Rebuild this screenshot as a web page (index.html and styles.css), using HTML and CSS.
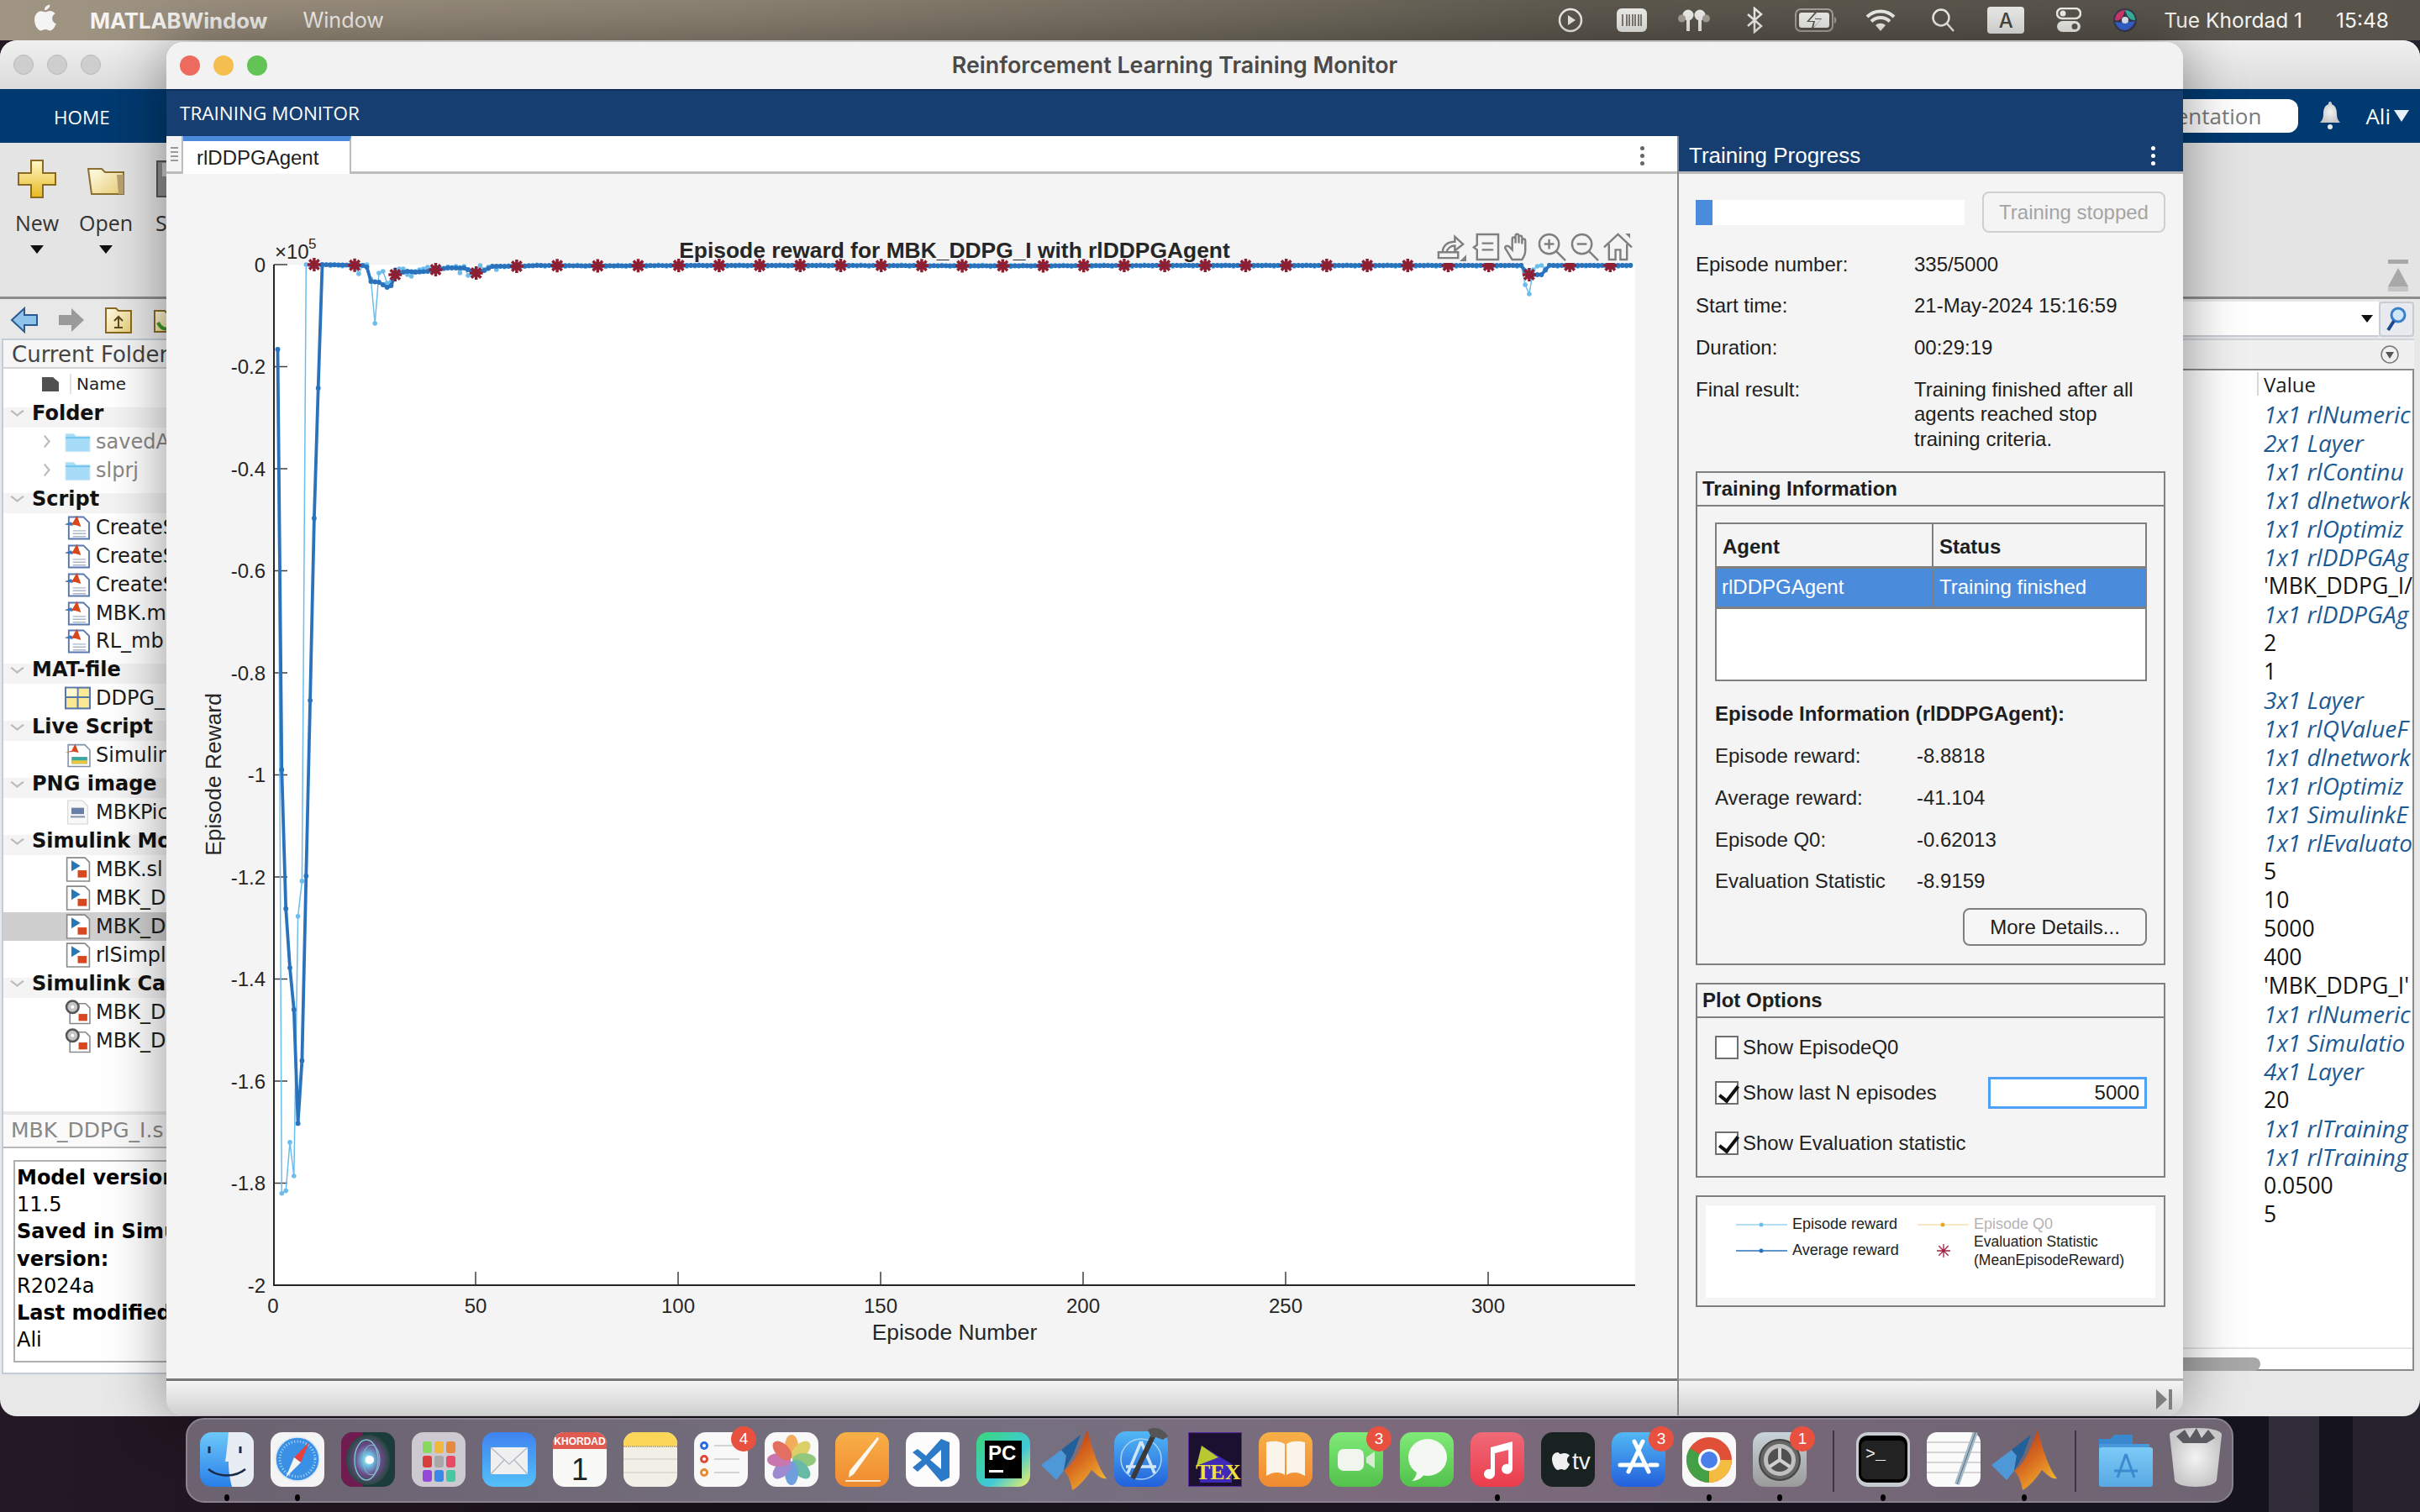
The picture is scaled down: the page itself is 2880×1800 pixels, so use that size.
FILE: index.html
```html
<!DOCTYPE html>
<html lang="en">
<head>
<meta charset="utf-8">
<title>Reinforcement Learning Training Monitor</title>
<link rel="stylesheet" href="styles.css">
</head>
<body>
<svg class="defs" width="0" height="0" aria-hidden="true">
  <defs>
    <linearGradient id="gYellow" x1="0" y1="0" x2="0" y2="1"><stop offset="0" stop-color="#fff8c8"/><stop offset="1" stop-color="#e8b820"/></linearGradient>
    <linearGradient id="gFolder" x1="0" y1="0" x2="1" y2="1"><stop offset="0" stop-color="#fffbe8"/><stop offset="1" stop-color="#e9cf78"/></linearGradient>
    <linearGradient id="gFinder" x1="0" y1="0" x2="0" y2="1"><stop offset="0" stop-color="#6cc8fa"/><stop offset="1" stop-color="#2a7fe8"/></linearGradient>
    <linearGradient id="gMail" x1="0" y1="0" x2="0" y2="1"><stop offset="0" stop-color="#3f83f0"/><stop offset="1" stop-color="#54c0f8"/></linearGradient>
    <linearGradient id="gOrange" x1="0" y1="0" x2="0" y2="1"><stop offset="0" stop-color="#f8b048"/><stop offset="1" stop-color="#f08a30"/></linearGradient>
    <linearGradient id="gGreen" x1="0" y1="0" x2="0" y2="1"><stop offset="0" stop-color="#80ea78"/><stop offset="1" stop-color="#52c24c"/></linearGradient>
    <linearGradient id="gRed" x1="0" y1="0" x2="0" y2="1"><stop offset="0" stop-color="#f06a78"/><stop offset="1" stop-color="#ea3c4c"/></linearGradient>
    <linearGradient id="gBlue" x1="0" y1="0" x2="0" y2="1"><stop offset="0" stop-color="#52b8f4"/><stop offset="1" stop-color="#2260dc"/></linearGradient>
    <linearGradient id="gPeak" x1="0" y1="0" x2="0.6" y2="1"><stop offset="0" stop-color="#a82c18"/><stop offset="0.55" stop-color="#d86a20"/><stop offset="1" stop-color="#f0b030"/></linearGradient>
    <linearGradient id="gPC" x1="0" y1="0" x2="1" y2="1"><stop offset="0" stop-color="#38d878"/><stop offset="0.6" stop-color="#40c8d8"/><stop offset="1" stop-color="#f4f060"/></linearGradient>
    <linearGradient id="gSys" x1="0" y1="0" x2="0" y2="1"><stop offset="0" stop-color="#c8d4d8"/><stop offset="1" stop-color="#9a9a9a"/></linearGradient>
    <linearGradient id="gFold" x1="0" y1="0" x2="0" y2="1"><stop offset="0" stop-color="#7ccaf6"/><stop offset="1" stop-color="#58a8e4"/></linearGradient>
    <radialGradient id="gSiri"><stop offset="0" stop-color="#ffffff"/><stop offset="0.22" stop-color="#6ec8e8"/><stop offset="0.6" stop-color="#6a4a88"/><stop offset="1" stop-color="#284840"/></radialGradient>
    <radialGradient id="gTrash"><stop offset="0" stop-color="#f4f4f4"/><stop offset="1" stop-color="#c8c8c8"/></radialGradient>

    <g id="star"><path d="M-8 0H8M0-8V8M-5.7-5.7 5.7 5.7M-5.7 5.7 5.7-5.7"/></g>

    <symbol id="ml" viewBox="0 0 78 72">
      <polygon points="0,42 24,24 30,31 27,49 18,60" fill="#4f98d8"/>
      <polygon points="24,24 47,6 38,30 27,49 30,31" fill="#22609c"/>
      <path d="M55 0C60 20 68 46 78 58 72 60 66 53 60 48 54 57 45 68 37 72 35 60 31 52 27 49 41 40 47 20 55 0Z" fill="url(#gPeak)"/>
    </symbol>
    <symbol id="fi-folder" viewBox="0 0 32 26">
      <path d="M1 3h10l3 3h17v19H1z" fill="#a6dcf8" stroke="#d8e8f0"/>
      <path d="M1 8h30" stroke="#70c4ee" stroke-width="2"/>
    </symbol>
    <symbol id="fi-script" viewBox="0 0 32 30">
      <path d="M5 2h18l7 7v20H5z" fill="#fff" stroke="#5a78b0" stroke-width="2"/>
      <path d="M10 19h16M10 22.500h16M10 26h16" stroke="#aab6c8" stroke-width="1.500"/>
      <path d="M0 11l10-2 5-9 5 14-7-2z" fill="#d8481c"/>
      <path d="M0 11l8-3 2 5z" fill="#3878c0"/>
    </symbol>
    <symbol id="fi-mat" viewBox="0 0 30 26">
      <rect x="1" y="1" width="28" height="24" fill="#fbe996" stroke="#5878a8" stroke-width="2"/>
      <path d="M15 1v24M1 12h28" stroke="#5878a8" stroke-width="2"/>
      <rect x="2" y="2" width="12" height="9" fill="#fff8d0"/>
    </symbol>
    <symbol id="fi-live" viewBox="0 0 30 28">
      <path d="M4 2h19l6 6v19H4z" fill="#fff" stroke="#8090a8" stroke-width="1.500"/>
      <path d="M8 16h18v8H8z" fill="#38a8a0"/><path d="M8 20h18v4H8z" fill="#e8c840"/>
      <path d="M0 11l8-2 4-8 4 10-6-1z" fill="#d8481c"/>
    </symbol>
    <symbol id="fi-png" viewBox="0 0 26 28">
      <path d="M2 1h16l6 6v20H2z" fill="#f8f8f8" stroke="#d4d4d4"/>
      <rect x="6" y="9" width="14" height="7" fill="#6880a8"/>
      <path d="M5 19h16" stroke="#8898b0" stroke-width="2"/>
    </symbol>
    <symbol id="fi-slx" viewBox="0 0 28 28">
      <path d="M2 1h20l5 5v21H2z" fill="#fff" stroke="#888" stroke-width="1.500"/>
      <path d="M7 4l10 6-10 6z" fill="#2878b8"/>
      <rect x="14" y="15" width="10" height="8" fill="#d84820"/>
    </symbol>
    <symbol id="fi-slxc" viewBox="0 0 30 28">
      <path d="M6 4h18l5 5v18H6z" fill="#fff" stroke="#888" stroke-width="1.500"/>
      <circle cx="9" cy="8" r="7" fill="#c4c4c4" stroke="#555" stroke-width="2.500"/>
      <circle cx="9" cy="8" r="2" fill="#fff"/>
      <rect x="16" y="16" width="10" height="8" fill="#d84820"/>
    </symbol>
  </defs>
</svg>

<header class="menubar">
  <svg class="apple" viewBox="0 0 28 32"><path d="M19 0c.3 3.500-3 7-6.500 6.800C12.100 3.400 15.500.3 19 0ZM13 9c1.800 0 3.300-1.400 6.200-1.400 2.200 0 4.700 1.100 6.300 3.400-5.300 3.100-4.400 10.500 1.300 12.600-1.600 3.700-4.300 8.400-7.400 8.400-2.200 0-3-1.400-5.700-1.400-2.800 0-3.700 1.400-5.700 1.400C4.300 32 0 25.200 0 18.800 0 12.500 4 8 8.100 8c2 0 3.600 1 4.900 1Z"/></svg>
  <span class="menu-app">MATLABWindow</span>
  <span class="menu-item">Window</span>
  <div class="menu-icons">
    <svg width="30" height="30" viewBox="0 0 30 30"><circle cx="15" cy="15" r="13" class="st-w"/><path d="M12 9l9 6-9 6z" class="fl-w"/></svg>
    <svg width="36" height="28" viewBox="0 0 36 28"><rect width="36" height="28" rx="6" class="fl-w"/><path d="M7 7v14M12 7v14M15 7v14M19 7v14M22 7v14M26 7v14M29 7v14" stroke="#5f5a50" stroke-width="1.500"/></svg>
    <svg width="38" height="26" viewBox="0 0 38 26"><rect x="10" y="6" width="4" height="20" class="fl-w"/><rect x="24" y="6" width="4" height="20" class="fl-w"/><circle cx="12" cy="7" r="6.500" class="fl-w"/><circle cx="26" cy="7" r="6.500" class="fl-w"/><circle cx="4.500" cy="11" r="4.500" fill="#aaa69c"/><circle cx="33.500" cy="11" r="4.500" fill="#aaa69c"/></svg>
    <svg width="20" height="32" viewBox="0 0 20 32"><path d="M2 9l16 14-8 7V2l8 7L2 23" class="st-w"/></svg>
    <svg width="52" height="28" viewBox="0 0 52 28"><rect x="1" y="1" width="44" height="26" rx="6" class="st-g"/><rect x="5" y="5" width="36" height="18" rx="3" class="fl-w"/><path d="M47 10c3 1 3 7 0 8z" fill="#aaa69c"/><path d="M27 1 14 16h8l-3 11 13-15h-8z" fill="#5f5a50"/><path d="M26 5 17 15h7l-2 8 9-10h-7z" class="fl-w"/></svg>
    <svg width="36" height="28" viewBox="0 0 36 28"><path d="M2 10a23 23 0 0 1 32 0M7 15.500a16 16 0 0 1 22 0" class="st-w wide"/><path d="M12 20a9 9 0 0 1 12 0l-6 7z" class="fl-w"/></svg>
    <svg width="28" height="30" viewBox="0 0 28 30"><circle cx="12" cy="12" r="9.500" class="st-w"/><path d="M19 19l8 9" class="st-w"/></svg>
    <span class="keychip">A</span>
    <svg width="30" height="30" viewBox="0 0 30 30"><rect x="1" y="1" width="28" height="12" rx="6" class="st-w"/><circle cx="8" cy="7" r="3.500" class="fl-w"/><rect x="1" y="16" width="28" height="13" rx="6.500" class="fl-w"/><circle cx="22" cy="22.500" r="3.500" fill="#5f5a50"/></svg>
    <svg width="30" height="30" viewBox="0 0 30 30"><circle cx="15" cy="15" r="14" fill="#3c3a50"/><path d="M3 15a12 12 0 0 1 12-12c-2 8-6 14-12 12Z" fill="#d83a70"/><path d="M15 3a12 12 0 0 1 12 12c-6 1-10-5-12-12Z" fill="#38b8a0"/><path d="M3 17c6 2 10 0 12-3 3 3 7 4 12 2-3 8-9 11-12 11-6 0-10-4-12-10Z" fill="#3868d8"/><circle cx="15" cy="15" r="4" fill="#e8f0f8"/></svg>
  </div>
  <span class="menu-date">Tue Khordad 1</span>
  <span class="menu-time">15:48</span>
</header>

<section class="win main-win">
  <div class="main-title">
    <span class="light l-off"></span><span class="light l-off"></span><span class="light l-off"></span>
  </div>
  <div class="ribbon">
    <span class="home-tab">HOME</span>
    <span class="search-pill">Search Documentation</span>
    <svg class="bell" width="24" height="34" viewBox="0 0 24 34"><path d="M12 0c1.500 0 2 1 2 3 5 2 6 7 6 12 0 5 2 8 4 10H0c2-2 4-5 4-10 0-5 1-10 6-12 0-2 .5-3 2-3Z" fill="url(#gTrash)"/><circle cx="12" cy="30" r="3" fill="#e8e8e8"/></svg>
    <span class="user">Ali</span>
    <span class="user-caret"></span>
  </div>
  <div class="toolstrip">
    <div class="tool">
      <svg width="46" height="46" viewBox="0 0 46 46"><path d="M16 1h14v15h15v14H30v15H16V30H1V16h15z" fill="url(#gYellow)" stroke="#8a6a20" stroke-width="2"/></svg>
      <span class="tool-label">New</span>
      <span class="caret-d"></span>
    </div>
    <div class="tool">
      <svg class="open-ic" width="46" height="32" viewBox="0 0 46 32"><path d="M2 1h16l4 4h22v26H6z" fill="url(#gFolder)" stroke="#8a7030" stroke-width="2"/><path d="M36 8h8v23h-6z" fill="#b8a070"/></svg>
      <span class="tool-label">Open</span>
      <span class="caret-d"></span>
    </div>
    <div class="tool tool-s">
      <svg width="30" height="46" viewBox="0 0 30 46"><path d="M2 2h28v42H2z" fill="#8c8c8c" stroke="#555" stroke-width="2"/><rect x="8" y="4" width="22" height="16" fill="#c8c8c8"/></svg>
      <span class="tool-label">S</span>
    </div>
    <svg class="dock-up" width="30" height="38" viewBox="0 0 30 38"><rect x="3" y="0" width="24" height="5" fill="#a8a8a8"/><path d="M15 10l12 22H3z" fill="#a8a8a8"/><rect x="3" y="32" width="24" height="6" fill="#c4c4c4"/></svg>
  </div>
  <div class="main-body">
    <div class="col-left">
      <div class="addr">
        <svg width="34" height="34" viewBox="0 0 34 34"><path d="M2 17 17 3v8h15v12H17v8z" fill="#8ec4ec" stroke="#2a5a90" stroke-width="2"/></svg>
        <svg width="34" height="34" viewBox="0 0 34 34"><path d="M32 17 17 3v8H2v12h15v8z" fill="#9a9a9a"/></svg>
        <svg width="34" height="34" viewBox="0 0 34 34"><path d="M2 3h12l3 3h15v26H2z" fill="url(#gFolder)" stroke="#8a6a20" stroke-width="2"/><path d="M17 26V13M12 18l5-5 5 5M12 26h10" stroke="#5a4a20" stroke-width="2" fill="none"/></svg>
        <svg width="34" height="34" viewBox="0 0 34 34"><path d="M4 6h12l3 3h14v22H4z" fill="url(#gFolder)" stroke="#8a6a20" stroke-width="2"/><path d="M8 20c4 8 10 10 16 4" stroke="#3a9a2a" stroke-width="4" fill="none"/></svg>
      </div>
      <div class="folder-panel">
        <div class="cf-head">Current Folder</div>
        <div class="cf-name">
          <svg width="20" height="17" viewBox="0 0 20 17"><path d="M0 0h13l7 6v11H0z" fill="#505050"/></svg>
          <span class="cf-div"></span>
          <span>Name</span>
        </div>
        <div class="tree">
          <div class="tg"><span class="chev-d"></span>Folder</div>
          <div class="tr dim"><span class="chev-r"></span><svg class="fi"><use href="#fi-folder"/></svg>savedA</div>
          <div class="tr dim"><span class="chev-r"></span><svg class="fi"><use href="#fi-folder"/></svg>slprj</div>
          <div class="tg"><span class="chev-d"></span>Script</div>
          <div class="tr"><svg class="fi"><use href="#fi-script"/></svg>CreateS</div>
          <div class="tr"><svg class="fi"><use href="#fi-script"/></svg>CreateS</div>
          <div class="tr"><svg class="fi"><use href="#fi-script"/></svg>CreateS</div>
          <div class="tr"><svg class="fi"><use href="#fi-script"/></svg>MBK.m</div>
          <div class="tr"><svg class="fi"><use href="#fi-script"/></svg>RL_mb</div>
          <div class="tg"><span class="chev-d"></span>MAT-file</div>
          <div class="tr"><svg class="fi"><use href="#fi-mat"/></svg>DDPG_</div>
          <div class="tg"><span class="chev-d"></span>Live Script</div>
          <div class="tr"><svg class="fi"><use href="#fi-live"/></svg>Simulin</div>
          <div class="tg"><span class="chev-d"></span>PNG image</div>
          <div class="tr"><svg class="fi"><use href="#fi-png"/></svg>MBKPic</div>
          <div class="tg"><span class="chev-d"></span>Simulink Mo</div>
          <div class="tr"><svg class="fi"><use href="#fi-slx"/></svg>MBK.sl</div>
          <div class="tr"><svg class="fi"><use href="#fi-slx"/></svg>MBK_D</div>
          <div class="tr sel"><svg class="fi"><use href="#fi-slx"/></svg>MBK_D</div>
          <div class="tr"><svg class="fi"><use href="#fi-slx"/></svg>rlSimpl</div>
          <div class="tg"><span class="chev-d"></span>Simulink Ca</div>
          <div class="tr"><svg class="fi"><use href="#fi-slxc"/></svg>MBK_D</div>
          <div class="tr"><svg class="fi"><use href="#fi-slxc"/></svg>MBK_D</div>
        </div>
        <div class="detail-title">MBK_DDPG_I.s</div>
        <div class="detail-box">
          <b>Model version</b>
          <span>11.5</span>
          <b>Saved in Simu</b>
          <b>version:</b>
          <span>R2024a</span>
          <b>Last modified</b>
          <span>Ali</span>
        </div>
      </div>
    </div>
    <div class="col-right">
      <div class="addr-r">
        <div class="addr-input"><span class="caret-d small"></span></div>
        <div class="addr-btn"><svg width="26" height="32" viewBox="0 0 26 32"><circle cx="15" cy="11" r="8" fill="#cfe6f8" stroke="#3a80c8" stroke-width="3"/><path d="M10 18 3 29" stroke="#1c4a90" stroke-width="4"/></svg></div>
      </div>
      <div class="ws-head"><svg width="24" height="24" viewBox="0 0 24 24"><circle cx="12" cy="12" r="10" fill="none" stroke="#777" stroke-width="1.500"/><path d="M7 9h10l-5 8z" fill="#555"/></svg></div>
      <div class="ws-table">
        <div class="ws-th"><span class="ws-thdiv"></span>Value</div>
        <div class="vals">
          <i>1x1 rlNumeric</i><i>2x1 Layer</i><i>1x1 rlContinu</i><i>1x1 dlnetwork</i><i>1x1 rlOptimiz</i><i>1x1 rlDDPGAg</i><span>'MBK_DDPG_I/</span><i>1x1 rlDDPGAg</i><span>2</span><span>1</span><i>3x1 Layer</i><i>1x1 rlQValueF</i><i>1x1 dlnetwork</i><i>1x1 rlOptimiz</i><i>1x1 SimulinkE</i><i>1x1 rlEvaluato</i><span>5</span><span>10</span><span>5000</span><span>400</span><span>'MBK_DDPG_I'</span><i>1x1 rlNumeric</i><i>1x1 Simulatio</i><i>4x1 Layer</i><span>20</span><i>1x1 rlTraining</i><i>1x1 rlTraining</i><span>0.0500</span><span>5</span>
        </div>
        <div class="ws-scroll"><span class="ws-thumb"></span></div>
      </div>
    </div>
  </div>
</section>

<section class="win monitor">
  <div class="mon-title">
    <span class="light l-red"></span><span class="light l-yel"></span><span class="light l-grn"></span>
    <span class="mon-title-text">Reinforcement Learning Training Monitor</span>
  </div>
  <div class="mon-band">TRAINING MONITOR</div>
  <div class="mon-body">
    <div class="plot-col">
      <div class="tabstrip">
        <span class="grip"></span>
        <span class="tab">rlDDPGAgent</span>
        <span class="kebab dark"></span>
      </div>
      <div class="plot">
        <svg id="chart" class="chart" viewBox="198 207 1799 1434" width="1799" height="1434">
          <rect x="326" y="315" width="1620" height="1215" fill="#fff"/>
          <g class="ticks">
            <path d="M326 315H342M326 436.500H342M326 558H342M326 679.500H342M326 801H342M326 922.500H342M326 1044H342M326 1165.500H342M326 1287H342M326 1408.500H342"/>
            <path d="M566 1530V1514M807 1530V1514M1048 1530V1514M1289 1530V1514M1530 1530V1514M1771 1530V1514"/>
          </g>
          <g id="series"></g>
          <path class="axes" d="M326 315V1530H1946"/>
          <g class="tl-y">
            <text x="316" y="324">0</text><text x="316" y="445">-0.2</text><text x="316" y="567">-0.4</text><text x="316" y="688">-0.6</text><text x="316" y="810">-0.8</text><text x="316" y="931">-1</text><text x="316" y="1053">-1.2</text><text x="316" y="1174">-1.4</text><text x="316" y="1296">-1.6</text><text x="316" y="1417">-1.8</text><text x="316" y="1539">-2</text>
          </g>
          <g class="tl-x">
            <text x="325" y="1563">0</text><text x="566" y="1563">50</text><text x="807" y="1563">100</text><text x="1048" y="1563">150</text><text x="1289" y="1563">200</text><text x="1530" y="1563">250</text><text x="1771" y="1563">300</text>
          </g>
          <text class="expo" x="327" y="308">×10</text>
          <text class="expo-sup" x="367" y="296">5</text>
          <text class="ptitle" x="1136" y="307">Episode reward for MBK_DDPG_I with rlDDPGAgent</text>
          <text class="xlab" x="1136" y="1595">Episode Number</text>
          <text class="ylab" transform="translate(263 922) rotate(-90)">Episode Reward</text>
        </svg>
        <div class="axes-tools">
          <svg viewBox="0 0 36 36"><path d="M2 32h24v-7H2zM7 25c0-8 6-13 15-13V6l10 9-10 8v-6c-5 0-9 3-10 8"/><path class="solid" d="M36 28v8h-8z"/></svg>
          <svg viewBox="0 0 36 36"><path d="M8 3h26v31H8V22l-4-3 4-3zM14 14h14M14 22h14"/></svg>
          <svg viewBox="0 0 36 36"><path d="M11 34 3 21c-2-3 1-5 4-3l4 4V9c0-3 4-3 4 0v5-9c0-3 4-3 4 0v9-7c0-3 4-3 4 0v8-4c0-3 4-3 4 0v12c0 5-2 8-4 11z"/></svg>
          <svg viewBox="0 0 36 36"><circle cx="15" cy="15" r="12"/><path d="M15 9v12M9 15h12M24 24l11 11"/></svg>
          <svg viewBox="0 0 36 36"><circle cx="15" cy="15" r="12"/><path d="M9 15h12M24 24l11 11"/></svg>
          <svg viewBox="0 0 36 36"><path d="M1 19 18 3l17 16M7 15v19h8V22h6v12h8V15"/><path class="solid" d="M27 2h6v6z"/></svg>
        </div>
      </div>
      <div class="statusbar"></div>
    </div>
    <aside class="panel">
      <div class="panel-head"><span>Training Progress</span><span class="kebab"></span></div>
      <div class="panel-body">
        <div class="prog-row">
          <div class="prog"><span class="prog-fill"></span></div>
          <span class="btn-stop">Training stopped</span>
        </div>
        <div class="info">
          <span>Episode number:</span><span>335/5000</span>
          <span>Start time:</span><span>21-May-2024 15:16:59</span>
          <span>Duration:</span><span>00:29:19</span>
          <span>Final result:</span><span class="final">Training finished after all agents reached stop training criteria.</span>
        </div>
        <div class="box box-info">
          <div class="box-head">Training Information</div>
          <div class="box-pad">
            <div class="agents">
              <div class="ag-h"><span>Agent</span><span>Status</span></div>
              <div class="ag-r"><span>rlDDPGAgent</span><span>Training finished</span></div>
            </div>
            <div class="ep-title">Episode Information (rlDDPGAgent):</div>
            <div class="ep-grid">
              <span>Episode reward:</span><span>-8.8818</span>
              <span>Average reward:</span><span>-41.104</span>
              <span>Episode Q0:</span><span>-0.62013</span>
              <span>Evaluation Statistic</span><span>-8.9159</span>
            </div>
            <div class="more-row"><span class="btn-more">More Details...</span></div>
          </div>
        </div>
        <div class="box box-opts">
          <div class="box-head">Plot Options</div>
          <div class="box-pad">
            <div class="opt first"><span class="cb"></span>Show EpisodeQ0</div>
            <div class="opt second"><span class="cb on"></span>Show last N episodes<span class="num">5000</span></div>
            <div class="opt third"><span class="cb on"></span>Show Evaluation statistic</div>
          </div>
        </div>
        <div class="box box-legend">
          <div class="legend">
            <svg class="lg-line" viewBox="0 0 61 10"><path d="M0 5H61" stroke="#6cbcec" stroke-width="1.200"/><circle cx="30" cy="5" r="2.500" fill="#6cbcec"/></svg>
            <span>Episode reward</span>
            <svg class="lg-line" viewBox="0 0 61 10"><path d="M0 5H61" stroke="#edd48a" stroke-width="1.200"/><circle cx="30" cy="5" r="2.500" fill="#e8a820"/></svg>
            <span class="lg-off">Episode Q0</span>
            <svg class="lg-line" viewBox="0 0 61 10"><path d="M0 5H61" stroke="#2a73bc" stroke-width="1.500"/><circle cx="30" cy="5" r="2.500" fill="#2a73bc"/></svg>
            <span>Average reward</span>
            <svg class="lg-star" viewBox="-9 -9 18 18"><use href="#star"/></svg>
            <span class="lg-two">Evaluation Statistic<br>(MeanEpisodeReward)</span>
          </div>
        </div>
      </div>
      <div class="statusbar">
        <svg class="collapse" width="20" height="26" viewBox="0 0 20 26"><path d="M0 1l13 12L0 25z" fill="#7f7f7f"/><path d="M17 1v24" stroke="#7f7f7f" stroke-width="4"/></svg>
      </div>
    </aside>
  </div>
</section>

<footer class="dock">
  <div class="di run"><svg viewBox="0 0 64 65"><rect width="64" height="65" rx="14" fill="url(#gFinder)"/><path d="M34 0h16a14 14 0 0 1 14 14v37a14 14 0 0 1-14 14H38c-3-12-4-20-4-30h-4C32 22 33 10 34 0Z" fill="#e8edf4"/><path d="M11 17v8M48 17v8" stroke="#1c2c48" stroke-width="3"/><path d="M10 44c12 10 32 10 44 0" stroke="#1c2c48" stroke-width="2.500" fill="none"/></svg></div>
  <div class="di run"><svg viewBox="0 0 64 65"><rect width="64" height="65" rx="14" fill="#f4f4f4"/><circle cx="32" cy="32" r="26" fill="#3a90e4" stroke="#d8e8f4" stroke-width="1.500"/><circle cx="32" cy="32" r="21" fill="none" stroke="#b8d8f4" stroke-width="3" stroke-dasharray="1 2.500"/><path d="M46 12 36 36 28 30z" fill="#e84040"/><path d="M18 54 28 30 36 36z" fill="#f4f4f4"/></svg></div>
  <div class="di"><svg viewBox="0 0 64 65"><rect width="64" height="65" rx="14" fill="#1c3c3c"/><path d="M0 14A14 14 0 0 1 14 0h12v65H14A14 14 0 0 1 0 51z" fill="#701c50"/><ellipse cx="32" cy="33" rx="26" ry="30" fill="url(#gSiri)"/><ellipse cx="30" cy="33" rx="14" ry="24" fill="none" stroke="#7cc0c8" stroke-width="1.500"/><ellipse cx="36" cy="33" rx="10" ry="18" fill="none" stroke="#7cc0c8"/><circle cx="34" cy="33" r="5" fill="#fff"/></svg></div>
  <div class="di"><svg viewBox="0 0 64 65"><rect width="64" height="65" rx="14" fill="#ccc9d0"/><rect x="13" y="11" width="11" height="14" rx="3" fill="#88d860"/><rect x="27" y="11" width="11" height="14" rx="3" fill="#f0b83c"/><rect x="41" y="11" width="11" height="14" rx="3" fill="#e8883c"/><rect x="13" y="28" width="11" height="14" rx="3" fill="#d83c3c"/><rect x="27" y="28" width="11" height="14" rx="3" fill="#a8a8a8"/><rect x="41" y="28" width="11" height="14" rx="3" fill="#e84c64"/><rect x="13" y="45" width="11" height="14" rx="3" fill="#9448d8"/><rect x="27" y="45" width="11" height="14" rx="3" fill="#3c88e8"/><rect x="41" y="45" width="11" height="14" rx="3" fill="#48c8a0"/></svg></div>
  <div class="di"><svg viewBox="0 0 64 65"><rect width="64" height="65" rx="14" fill="url(#gMail)"/><rect x="10" y="18" width="44" height="32" rx="2" fill="#f0f0f0"/><path d="M10 18l22 20 22-20M10 50l16-17M54 50 38 33" stroke="#b4bcc8" stroke-width="1.500" fill="none"/></svg></div>
  <div class="di"><svg viewBox="0 0 64 65"><rect width="64" height="65" rx="14" fill="#f8f8f6"/><path d="M0 20V14A14 14 0 0 1 14 0h36a14 14 0 0 1 14 14v6z" fill="#e05a50"/><text class="cal-m" x="32" y="15">KHORDAD</text><text class="cal-d" x="32" y="57">1</text></svg></div>
  <div class="di"><svg viewBox="0 0 64 65"><rect width="64" height="65" rx="14" fill="#f2efe6"/><path d="M0 17V14A14 14 0 0 1 14 0h36a14 14 0 0 1 14 14v3z" fill="#fcd658"/><path d="M0 17h64" stroke="#b8a880" stroke-width="2" stroke-dasharray="1.500 1"/><path d="M0 32h64M0 48h64" stroke="#d8d6ce" stroke-width="1.500"/></svg></div>
  <div class="di"><svg viewBox="0 0 64 65"><rect width="64" height="65" rx="14" fill="#f8f8f8"/><circle cx="12" cy="16" r="5" fill="#2a6ce0"/><circle cx="12" cy="32" r="5" fill="#e04838"/><circle cx="12" cy="48" r="5" fill="#e88a30"/><circle cx="12" cy="16" r="2" fill="#fff"/><circle cx="12" cy="32" r="2" fill="#fff"/><circle cx="12" cy="48" r="2" fill="#fff"/><path d="M24 16h30M24 32h30M24 48h30" stroke="#c8c8c8" stroke-width="1.500"/></svg><span class="badge">4</span></div>
  <div class="di"><svg viewBox="0 0 64 65"><rect width="64" height="65" rx="14" fill="#f8f8f8"/><g class="petals"><ellipse cx="32" cy="17" rx="8" ry="14" fill="#f0a040"/><ellipse cx="43" cy="22" rx="8" ry="14" fill="#d8c850" transform="rotate(45 43 22)"/><ellipse cx="47" cy="33" rx="14" ry="8" fill="#80c068"/><ellipse cx="43" cy="44" rx="8" ry="14" fill="#50b098" transform="rotate(-45 43 44)"/><ellipse cx="32" cy="49" rx="8" ry="14" fill="#5890d8"/><ellipse cx="21" cy="44" rx="8" ry="14" fill="#8c78c8" transform="rotate(45 21 44)"/><ellipse cx="17" cy="33" rx="14" ry="8" fill="#c060a0"/><ellipse cx="21" cy="22" rx="8" ry="14" fill="#e05848" transform="rotate(-45 21 22)"/></g></svg></div>
  <div class="di"><svg viewBox="0 0 64 65"><rect width="64" height="65" rx="14" fill="url(#gOrange)"/><path d="M50 6c1 0 2 1 1.500 3L22 50l-6 4 1-8z" fill="#fbf8f0"/><path d="M12 58h42" stroke="#fbe8c8" stroke-width="2"/></svg></div>
  <div class="di"><svg viewBox="0 0 64 65"><rect width="64" height="65" rx="14" fill="#fcfcfc"/><path d="M42 8 24 28 14 20l-6 4 11 9-11 9 6 5 10-9 18 21 10-5V12z" fill="#2c7ac8"/><path d="M42 21v23l-13-11z" fill="#fcfcfc"/></svg></div>
  <div class="di"><svg viewBox="0 0 64 65"><rect width="64" height="65" rx="14" fill="url(#gPC)"/><rect x="10" y="10" width="44" height="45" fill="#000"/><text class="pc" x="14" y="33">PC</text><rect x="15" y="45" width="17" height="3" fill="#fff"/></svg></div>
  <div class="di wide-ic"><svg viewBox="0 0 78 72"><use href="#ml"/></svg></div>
  <div class="di"><svg class="tall" viewBox="0 0 72 72"><rect y="6" width="64" height="66" rx="14" fill="url(#gBlue)"/><circle cx="32" cy="39" r="24" fill="none" stroke="#a8d4f4" stroke-width="1.500"/><path d="M32 18 16 56M32 18 48 56M14 48h36" stroke="#cfe6f8" stroke-width="3.500"/><path d="M48 8 22 62" stroke="#3a3a3a" stroke-width="6"/><path d="M40 4c10-5 20 0 24 8l-6 4-8-3-6 0z" fill="#555"/></svg></div>
  <div class="di"><svg viewBox="0 0 64 65"><rect width="64" height="65" fill="#1c1030" stroke="#5a2a9a" stroke-width="2"/><path d="M16 16 52 38V60H14z" fill="#4028b8"/><path d="M16 16 36 30 10 40z" fill="#b8c830"/><text class="tex" x="9" y="56">TEX</text></svg></div>
  <div class="di"><svg viewBox="0 0 64 65"><rect width="64" height="65" rx="14" fill="url(#gOrange)"/><path d="M31 14c-6-4-14-4-22-2v40l6-3c6-2 12-1 16 2zM33 14c6-4 14-4 22-2v40l-6-3c-6-2-12-1-16 2z" fill="#fbf4ea"/></svg></div>
  <div class="di"><svg viewBox="0 0 64 65"><rect width="64" height="65" rx="14" fill="url(#gGreen)"/><rect x="10" y="20" width="31" height="26" rx="7" fill="#f0f6ee"/><path d="M44 30l10-7v20l-10-7z" fill="#d8ecd4"/></svg><span class="badge">3</span></div>
  <div class="di"><svg viewBox="0 0 64 65"><rect width="64" height="65" rx="14" fill="url(#gGreen)"/><ellipse cx="33" cy="30" rx="23" ry="22" fill="#f4f8f2"/><path d="M20 46c0 6-3 10-6 12 6 0 12-3 15-8z" fill="#f4f8f2"/></svg></div>
  <div class="di run"><svg viewBox="0 0 64 65"><rect width="64" height="65" rx="14" fill="url(#gRed)"/><path d="M24 18 50 11V44a6.500 6 0 1 1-5-6V21l-16 4V50a6.500 6 0 1 1-5-6z" fill="#fff"/></svg></div>
  <div class="di"><svg viewBox="0 0 64 65"><rect width="64" height="65" rx="14" fill="#182220"/><path d="M20 24c-4 0-7 3-7 8 0 6 4 13 7 13 1.500 0 2-1 4-1s2.500 1 4 1c2 0 5-4 6-7-4-2-4-8 0-10-2-3-5-3-7-3-1.500 0-3 1-4 1s-2-2-3-2z" fill="#f0f0f0"/><text class="tv" x="37" y="44">tv</text></svg></div>
  <div class="di"><svg viewBox="0 0 64 65"><rect width="64" height="65" rx="14" fill="url(#gBlue)"/><path d="M37 11 20 47M27 11l17 36M10 39h31M46 39h8" stroke="#fff" stroke-width="5" stroke-linecap="round"/></svg><span class="badge">3</span></div>
  <div class="di run"><svg viewBox="0 0 64 65"><rect width="64" height="65" rx="14" fill="#f8f8f8"/><circle cx="32" cy="33" r="27" fill="#e05038"/><path d="M9 19 32 33 32 60A27 27 0 0 1 9 19Z" fill="#43a047"/><path d="M32 33 32 60A27 27 0 0 0 59 33Z" fill="#f4bc40"/><circle cx="32" cy="33" r="13" fill="#fff"/><circle cx="32" cy="33" r="10" fill="#4a7ee8"/></svg></div>
  <div class="di run"><svg viewBox="0 0 64 65"><rect width="64" height="65" rx="14" fill="url(#gSys)"/><circle cx="32" cy="33" r="24" fill="#666" stroke="#444" stroke-width="2"/><circle cx="32" cy="33" r="19" fill="#c0c0c0"/><circle cx="32" cy="33" r="14" fill="#505050"/><path d="M32 33V19M32 33 20 41M32 33 44 41" stroke="#d0d0d0" stroke-width="4"/></svg><span class="badge">1</span></div>
  <span class="dock-sep sep-a"></span>
  <div class="di run"><svg viewBox="0 0 64 65"><rect width="64" height="65" rx="14" fill="#c8ccd0"/><rect x="3" y="4" width="58" height="56" rx="10" fill="#000"/><rect x="6" y="10" width="52" height="46" rx="6" fill="#222"/><text class="term" x="11" y="32">&gt;_</text></svg></div>
  <div class="di"><svg viewBox="0 0 64 65"><rect width="64" height="65" rx="12" fill="#fafafa"/><path d="M0 12h64M0 24h64M0 36h64M0 48h64" stroke="#c8c8c8" stroke-width="1.500"/><path d="M58 0 36 62" stroke="#a0b8c8" stroke-width="6"/><path d="M58 0 36 62" stroke="#606c74" stroke-width="1"/></svg></div>
  <div class="di run wide-ic"><svg viewBox="0 0 78 72"><use href="#ml"/></svg></div>
  <span class="dock-sep sep-b"></span>
  <div class="di"><svg viewBox="0 0 64 65"><path d="M0 8h14l4-5h22v12H0z" fill="#3a88d0"/><path d="M0 14h60v10H0z" fill="#4a98dc"/><rect y="18" width="64" height="47" rx="3" fill="url(#gFold)"/><path d="M32 26 22 54M32 26l10 28M18 46h28" stroke="#3c8ad0" stroke-width="3"/></svg></div>
  <div class="di"><svg class="tall" viewBox="0 0 64 72"><path d="M0 10c0-5 12-8 31-8s31 3 31 8l-6 54c-1 5-12 8-25 8S7 69 6 64Z" fill="url(#gTrash)"/><path d="M8 12 18 4l6 10 8-12 6 12 8-10 8 10-10 6H16z" fill="#5a5a60"/></svg></div>
</footer>

<script src="chart.js"></script>
</body>
</html>
```

FILE: styles.css
```css
* { box-sizing: border-box; }
html, body { margin: 0; padding: 0; }
body {
  width: 2880px; height: 1800px; overflow: hidden; position: relative;
  font-family: "Liberation Sans", Arial, sans-serif; color: #1e1e1e;
  background:
    linear-gradient(90deg, transparent 0 2700px, rgba(120,110,130,.28) 2700px 2760px, transparent 2760px 2800px, rgba(90,80,100,.25) 2800px 2880px),
    linear-gradient(90deg, #241824 0, #171018 30%, #1a1520 60%, #14131c 100%);
}
.defs { position: absolute; }

/* menu bar */
.menubar {
  height: 48px; display: flex; align-items: center; padding-left: 41px; color: #fff;
  font-family: Inter, "Liberation Sans", sans-serif; font-size: 25.800px;
  background: linear-gradient(90deg, #a09483 0, #8f8474 30%, #6f695c 55%, #5f5a50 66%, #57534b 100%);
}
.apple { width: 27px; height: 32px; fill: #f4f4f4; margin-top: -6px; }
.menu-app { margin-left: 39px; font-weight: 700; letter-spacing: -.1px; color: #f6f4f0; }
.menu-item { margin-left: 42px; font-size: 25.200px; color: #f6f4f0; }
.menu-icons {
  margin-left: auto; display: grid; align-items: center; justify-items: center;
  grid-template-columns: 72px 74px 73px 71px 77px 75px 73px 78px 71px 64px;
}
.st-w { fill: none; stroke: #f4f4f0; stroke-width: 2.5; }
.st-w.wide { stroke-width: 4; }
.st-g { fill: none; stroke: #aaa69c; stroke-width: 2; }
.fl-w { fill: #f4f4f0; }
.keychip {
  width: 44px; height: 32px; border-radius: 4px; background: #f0f0ee; color: #4a4840;
  display: flex; align-items: center; justify-content: center; font-size: 24px; font-weight: 500;
}
.menu-date { margin-left: 14px; font-size: 24.500px; color: #f4f4f0; }
.menu-time { margin-left: 40px; margin-right: 37px; font-size: 24.500px; color: #f4f4f0; }

/* windows */
.win { position: absolute; overflow: hidden; border-radius: 20px; }
.main-win {
  left: 0; top: 48px; width: 2880px; height: 1638px; background: #e8e8e8;
  display: flex; flex-direction: column;
}
.main-title {
  height: 58px; display: flex; align-items: center; gap: 16px; padding-left: 16px;
  background: linear-gradient(#f0f0f0, #dcdcdc);
}
.light { width: 24px; height: 24px; border-radius: 50%; flex: none; }
.l-off { background: #cecece; border: 1px solid #b8b8b8; }
.l-red { background: #ed6a5e; }
.l-yel { background: #f5bf4f; }
.l-grn { background: #61c454; }

.ribbon {
  height: 64px; display: flex; align-items: center; background: #003a70; color: #fff;
  font-family: "Open Sans", sans-serif; padding-right: 13px;
}
.home-tab { margin-left: 64px; font-size: 22.500px; margin-top: 2px; }
.search-pill {
  margin-left: auto; width: 430px; height: 40px; border-radius: 0 12px 12px 0; background: #fff; color: #7a7a7a;
  font-size: 26px; display: flex; align-items: center; justify-content: flex-end; padding-right: 44px;
}
.bell { margin-left: 26px; }
.user { margin-left: 30px; font-size: 26px; }
.user-caret { width: 0; height: 0; margin-left: 4px; border: 9px solid transparent; border-top: 14px solid #e8f0f8; border-bottom: 0; }

.toolstrip {
  height: 186px; display: flex; align-items: flex-start; padding: 20px 0 0 21px; position: relative;
  background: #e4e4e4; border-bottom: 3px solid #8c8c8c;
}
.tool { width: 46px; margin-right: 36px; height: 150px; display: flex; flex-direction: column; align-items: center; }
.tool svg { flex: none; }
.tool-label { font-family: "Open Sans", sans-serif; font-size: 25px; color: #333; margin-top: 12px; }
.open-ic { margin: 10px 0 4px; }
.tool-s { align-items: flex-start; margin-right: 0; }
.caret-d { width: 0; height: 0; margin-top: 10px; border: 8px solid transparent; border-top: 10px solid #111; border-bottom: 0; }
.caret-d.small { border-width: 7px; border-top-width: 9px; border-bottom: 0; margin: 0; }
.dock-up { position: absolute; right: 11px; top: 139px; }

.main-body { flex: 1; display: flex; justify-content: space-between; min-height: 0; }
.col-left { width: 300px; display: flex; flex-direction: column; }
.addr { height: 47px; display: flex; align-items: center; gap: 22px; padding: 2px 0 0 12px; }
.folder-panel {
  height: 1233px; background: #fff; border: 2px solid #c4ccd6; margin-left: 2px; border-right: 0;
  display: flex; flex-direction: column; font-family: "DejaVu Sans", sans-serif;
}
.cf-head { height: 34px; font-size: 26px; color: #444; padding-left: 10px; line-height: 34px; background: #f6f6f6; border-bottom: 2px solid #d4d4d4; white-space: nowrap; }
.cf-name { height: 36px; display: flex; align-items: center; font-size: 20px; padding-left: 46px; color: #222; }
.cf-div { width: 2px; height: 24px; background: #e0e0e0; margin: 0 6px 0 13px; }
.tree { height: 848px; font-size: 24px; }
.tg, .tr { height: 33.950px; display: flex; align-items: center; white-space: nowrap; }
.tg { font-weight: 700; padding-left: 9px; color: #111; background: linear-gradient(#fff 30%, #f4f4f4 30%); }
.chev-d { width: 9px; height: 9px; margin: -4px 13px 0 3px; border: solid #bdbdbd; border-width: 0 2px 2px 0; transform: scaleX(1.300) rotate(45deg); }
.tr { padding-left: 73px; position: relative; color: #1c1c1c; }
.tr.dim { color: #888; }
.tr.sel { background: #cfcfcf; }
.chev-r { position: absolute; left: 45px; top: 12px; width: 9px; height: 9px; border: solid #bdbdbd; border-width: 2px 2px 0 0; transform: scaleY(1.200) rotate(45deg); }
.fi { width: 31px; height: 30px; margin-right: 6px; flex: none; }
.detail-title {
  height: 44px; font-size: 25px; color: #888; padding-left: 9px; line-height: 46px;
  background: linear-gradient(#e8e8e8 4px, #fafafa 4px); border-bottom: 2px solid #b8b8b8; white-space: nowrap;
}
.detail-box {
  margin: 14px 0 0 12px; height: 241px; width: 300px; border: 2px solid #b0b0b0; padding: 3px 0 0 2px;
  display: flex; flex-direction: column; font-size: 24px; line-height: 32.200px; color: #000; white-space: nowrap;
}

.col-right { width: 290px; display: flex; flex-direction: column; padding-right: 7px; }
.addr-r { height: 47px; display: flex; padding-top: 3px; }
.addr-input { flex: 1; height: 42px; background: #fff; border-bottom: 2px solid #c8ccd4; display: flex; align-items: center; justify-content: flex-end; padding-right: 7px; }
.addr-btn { width: 42px; height: 42px; background: #e8eaf0; border: 2px solid #c8ccd4; border-radius: 4px; display: flex; align-items: center; justify-content: center; }
.ws-head { height: 36px; background: #f0f0f0; border-top: 2px solid #cdd4dc; display: flex; align-items: center; justify-content: flex-end; padding-right: 17px; }
.ws-table { height: 1193px; background: #fff; border: 2px solid #8a8a8a; border-width: 2px 2px 2px 0; position: relative; display: flex; flex-direction: column; }
.ws-th { height: 33px; padding-left: 104px; font: 24px/33px "Open Sans", sans-serif; color: #1a1a1a; position: relative; }
.ws-thdiv { position: absolute; left: 96px; top: 2px; width: 2px; height: 28px; background: #d8d8d8; }
.vals { height: 1130px; overflow: hidden; font: 26.500px/34px "Open Sans", sans-serif; padding: 2px 0 0 104px; color: #111; display: flex; flex-direction: column; white-space: nowrap; }
.vals i { color: #1b5a94; font-style: italic; font-size: 28px; }
.ws-scroll { flex: 1; border-top: 2px solid #e6e6e6; position: relative; }
.ws-thumb { position: absolute; left: 0; top: 10px; width: 100px; height: 16px; background: #a8a8a8; border-radius: 0 8px 8px 0; }

/* training monitor */
.monitor {
  left: 198px; top: 50px; width: 2400px; height: 1635px; background: #f4f4f4;
  display: flex; flex-direction: column; box-shadow: 0 0 70px rgba(0,0,0,.42);
}
.mon-title { height: 56px; display: flex; align-items: center; justify-content: flex-start; gap: 16px; padding-left: 16px; background: #f2f2f2; position: relative; }
.mon-title-text {
  position: absolute; left: 0; right: 0; top: 11px; text-align: center; font: 600 26.800px Inter, "Liberation Sans", sans-serif; color: #4a4a4a;
}
.mon-band { height: 56px; background: #163e70; color: #fff; padding-left: 16px; font: 22.500px/54px "Open Sans", sans-serif; border-top: 2px solid #0e2e58; }
.mon-body { flex: 1; display: flex; min-height: 0; }
.plot-col { width: 1800px; display: flex; flex-direction: column; border-right: 2px solid #8a8a8a; }
.tabstrip { height: 45px; display: flex; background: #fff; border-bottom: 3px solid #bcbcbc; position: relative; }
.grip { width: 20px; height: 42px; background: repeating-linear-gradient(#9a9a9a 0 2px, transparent 2px 5px) center 13px / 9px 17px no-repeat #f4f4f4; border-right: 2px solid #bcbcbc; }
.tab { width: 200px; height: 45px; background: #fff; border-top: 6px solid #4a8cdb; border-right: 2px solid #bcbcbc; padding: 6px 0 0 16px; font-size: 24px; position: relative; z-index: 1; }
.kebab { width: 5px; height: 5px; border-radius: 50%; background: #fff; box-shadow: 0 -9px 0 #fff, 0 9px 0 #fff; }
.kebab.dark { position: absolute; left: 1754px; top: 21px; background: #666; box-shadow: 0 -9px 0 #666, 0 9px 0 #666; }
.plot { height: 1434px; position: relative; background: #f4f4f4; }
.chart { display: block; font-family: "Liberation Sans", Arial, sans-serif; fill: #262626; }
.ticks path { stroke: #404040; stroke-width: 1.500; fill: none; }
.axes { stroke: #262626; stroke-width: 2; fill: none; }
.tl-y { text-anchor: end; font-size: 24px; }
.tl-x { text-anchor: middle; font-size: 24px; }
.expo { font-size: 24px; }
.expo-sup { font-size: 17px; }
.ptitle { text-anchor: middle; font-size: 26.400px; font-weight: 700; }
.xlab { text-anchor: middle; font-size: 26.400px; }
.ylab { text-anchor: middle; font-size: 26.400px; }
.s-light { fill: none; stroke: #6cbcec; stroke-width: 1.500; stroke-linejoin: round; }
.s-avg { fill: none; stroke: #2a73bc; stroke-width: 3.800; stroke-linejoin: round; }
.d-light { fill: #6cbcec; }
.d-avg { fill: #2a73bc; }
.st-star { stroke: #8e1f33; stroke-width: 3.500; fill: none; }
.axes-tools { position: absolute; left: 1510px; top: 66px; width: 238px; height: 40px; display: flex; justify-content: space-between; align-items: center; padding: 0 3px 0 2px; background: #f4f4f4; }
.axes-tools svg { width: 35px; height: 35px; fill: none; stroke: #7f7f7f; stroke-width: 2.500; overflow: visible; }
.axes-tools .solid { fill: #7f7f7f; stroke: none; }
.statusbar { flex: 1; border-top: 3px solid #b0b0b0; background: linear-gradient(#f4f4f4, #cfcfcf); position: relative; }
.plot-col .statusbar { border-top-color: #777; }
.collapse { position: absolute; right: 12px; top: 9px; }

.panel { width: 600px; display: flex; flex-direction: column; }
.panel-head { height: 45px; background: #163e70; color: #fff; border-bottom: 3px solid #b8b8b8; font-size: 26px; display: flex; align-items: center; justify-content: space-between; padding: 5px 33px 0 12px; }
.panel-body { height: 1434px; padding: 21px 21px 0 20px; font-size: 24px; }
.prog-row { height: 49px; display: flex; align-items: center; justify-content: space-between; }
.prog { width: 320px; height: 30px; background: #fff; display: block; }
.prog-fill { display: block; width: 20px; height: 30px; background: #4a8cdb; }
.btn-stop { width: 218px; height: 49px; border: 2px solid #cfcfcf; border-radius: 8px; color: #a4a4a4; display: flex; align-items: center; justify-content: center; font-size: 24px; }
.info { margin-top: 13px; display: grid; grid-template-columns: 260px 1fr; grid-auto-rows: 49.500px; align-items: center; }
.info .final { grid-row: span 2; align-self: start; line-height: 29.500px; margin-top: 10px; }
.info span:nth-child(7) { align-self: start; margin-top: 10px; line-height: 29.500px; }
.box { border: 2px solid #7f7f7f; width: 559px; }
.box-info { margin-top: 23px; height: 588px; }
.box-head { height: 40px; border-bottom: 2px solid #7f7f7f; font-weight: 700; padding-left: 6px; line-height: 38px; }
.box-pad { padding: 19px 20px 0 21px; }
.agents { border: 2px solid #7f7f7f; height: 189px; width: 514px; background: #fff; }
.ag-h, .ag-r { display: grid; grid-template-columns: 256px 1fr; }
.ag-h { height: 53px; background: #f4f4f4; font-weight: 700; line-height: 54px; border-bottom: 3px solid #7f7f7f; }
.ag-h span { padding-left: 7px; }
.ag-h span + span { border-left: 2px solid #7f7f7f; }
.ag-r { height: 48px; background: #4a8cdb; color: #fff; line-height: 43px; border-bottom: 3px solid #7f7f7f; }
.ag-r span { padding-left: 6px; }
.ag-r span + span { border-left: 2px solid #7f7f7f; padding-left: 7px; }
.ep-title { margin-top: 25px; font-weight: 700; line-height: 28px; }
.ep-grid { margin-top: 12px; display: grid; grid-template-columns: 240px 1fr; grid-auto-rows: 49.700px; align-items: center; color: #222; }
.more-row { margin-top: 7px; display: flex; justify-content: flex-end; }
.btn-more { width: 219px; height: 45px; border: 2px solid #7f7f7f; border-radius: 8px; display: flex; align-items: center; justify-content: center; background: #f6f6f6; }
.box-opts { margin-top: 21px; height: 232px; }
.box-opts .box-pad { padding-top: 0; position: relative; }
.opt { display: flex; align-items: center; gap: 5px; white-space: nowrap; }
.opt.first { margin-top: 21px; height: 28px; }
.opt.second { margin-top: 26px; height: 28px; }
.opt.third { margin-top: 32px; height: 28px; }
.cb { width: 28px; height: 28px; background: #fff; border: 2px solid #6f6f6f; position: relative; flex: none; }
.cb.on::after { content: ""; position: absolute; left: 8px; top: -1px; width: 9px; height: 20px; border: solid #111; border-width: 0 4px 4px 0; transform: rotate(38deg); }
.num { margin-left: auto; margin-right: 0; width: 189px; height: 38px; border: 3px solid #4ea1f5; background: #fff; text-align: right; line-height: 32px; padding-right: 6px; }
.box-legend { margin-top: 21px; height: 133px; padding: 10px; }
.legend {
  height: 110px; background: #fff; padding: 12px 0 0 36px; font-size: 18px; color: #222; display: grid;
  grid-template-columns: 61px 143px 61px 1fr; grid-template-rows: 22px 40px; column-gap: 6px; align-items: center; white-space: nowrap;
}
.lg-line { width: 61px; height: 10px; }
.lg-off { color: #b4b4b4; }
.lg-star { width: 18px; height: 18px; justify-self: center; stroke: #a02040; stroke-width: 1.300; fill: none; }
.lg-two { line-height: 22px; font-size: 17.500px; }

/* dock */
.dock {
  position: absolute; left: 221px; top: 1688px; width: 2437px; height: 101px; padding: 15px 4px 0 5px; display: flex;
  border-radius: 22px; background: linear-gradient(90deg, #6c6270, #757080 40%, #7c6a7c 60%, #6e6472); border: 2px solid #8a8290;
}
.di { width: 84px; height: 66px; flex: none; display: flex; justify-content: center; position: relative; }
.di svg { width: 64px; height: 65px; display: block; }
.di svg.tall { width: 72px; height: 72px; margin-top: -7px; flex: none; }
.di.wide-ic svg { width: 78px; height: 72px; margin-top: -3px; flex: none; }
.di.run::after { content: ""; position: absolute; left: 39px; top: 74px; width: 6px; height: 8px; border-radius: 50%; background: #000; }
.badge {
  position: absolute; left: 54px; top: -7px; width: 30px; height: 30px; border-radius: 50%; background: #e8503f; color: #fff;
  font: 19px/30px "Liberation Sans", sans-serif; text-align: center;
}
.dock-sep { width: 2px; height: 73px; background: #3a3540; flex: none; margin-top: -2px; }
.sep-a { margin-left: 21px; margin-right: 16px; }
.sep-b { margin-left: 18px; margin-right: 17px; }
.cal-m { font: 700 12px "Liberation Sans", sans-serif; fill: #fff; text-anchor: middle; }
.cal-d { font: 36px "Liberation Sans", sans-serif; fill: #222; text-anchor: middle; }
.petals { opacity: .85; }
.pc { font: 700 24px "Liberation Sans", sans-serif; fill: #fff; }
.tex { font: 700 26px "Liberation Serif", serif; fill: #f0e040; }
.tv { font: 500 28px "Liberation Sans", sans-serif; fill: #f0f0f0; }
.term { font: 20px "Liberation Mono", monospace; fill: #f0f0f0; }
```

FILE: chart.js
```js
(function () {
  var NS = 'http://www.w3.org/2000/svg';
  var host = document.getElementById('series');
  var X0 = 325.7, PX = 4.82, Y0 = 315, YS = 607.5, LAST = 335;
  function X(e) { return X0 + e * PX; }
  function el(name, attrs) {
    var n = document.createElementNS(NS, name);
    for (var k in attrs) n.setAttribute(k, attrs[k]);
    return n;
  }
  var head = [-0.166, -0.99, -1.262, -1.378, -1.46, -1.683, -1.56, -1.198, -0.854, -0.497, -0.242, 0];
  var keys = [[12,0],[22,1],[23,3],[24,20],[26,21],[27,24],[28,27],[29,25],[30,12],[31,10],[33,8],[35,9],[38,8],[40,6],[43,4],[47,4],[50,10],[52,7],[54,2],[60,2],[65,1],[80,1.5],[100,1],[140,1],[180,1.5],[220,1],[260,1],[308,1],[309.7,12],[313,12],[315,1],[335,1]];
  function interp(e) {
    for (var i = 1; i < keys.length; i++) {
      if (e <= keys[i][0]) {
        var a = keys[i - 1], b = keys[i];
        return a[1] + (b[1] - a[1]) * (e - a[0]) / (b[0] - a[0]);
      }
    }
    return 1;
  }
  var avg = [], light = [];
  var lightHead = [-0.166, -1.82, -1.815, -1.72, -1.786, -1.277, -1.208, 0];
  var over = {21:11,22:1,23:0,24:17,25:70,26:10,27:8,28:22,29:20,30:6,31:5,32:5,33:12,34:14,35:8,36:6,37:5,38:3,46:10,47:2,48:13,49:12,51:1,55:6,309:24,310:35,311:6,312:2,313:1};
  for (var e = 1; e <= LAST; e++) {
    var yA = e <= 12 ? Y0 - head[e - 1] * YS : Y0 + interp(e);
    avg.push([X(e), yA]);
    var yL;
    if (e <= 8) yL = Y0 - lightHead[e - 1] * YS;
    else if (over[e] !== undefined) yL = Y0 + over[e];
    else yL = Y0 + interp(Math.max(e, 12)) * 0.6 + ((e * 7) % 5) * 0.45 - 0.3;
    light.push([X(e), yL]);
  }
  function line(pts, cls) {
    host.appendChild(el('polyline', { points: pts.map(function (p) { return p[0].toFixed(1) + ',' + p[1].toFixed(1); }).join(' '), 'class': cls }));
  }
  function dots(pts, cls, r) {
    pts.forEach(function (p) { host.appendChild(el('circle', { cx: p[0].toFixed(1), cy: p[1].toFixed(1), r: r, 'class': cls })); });
  }
  line(light, 's-light');
  dots(light, 'd-light', 2.8);
  line(avg, 's-avg');
  dots(avg, 'd-avg', 2.9);
  for (var s = 10; s <= 330; s += 10) {
    var sy = s === 10 ? Y0 : avg[s - 1][1];
    host.appendChild(el('use', { href: '#star', x: X(s).toFixed(1), y: sy.toFixed(1), 'class': 'st-star' }));
  }
})();
```
